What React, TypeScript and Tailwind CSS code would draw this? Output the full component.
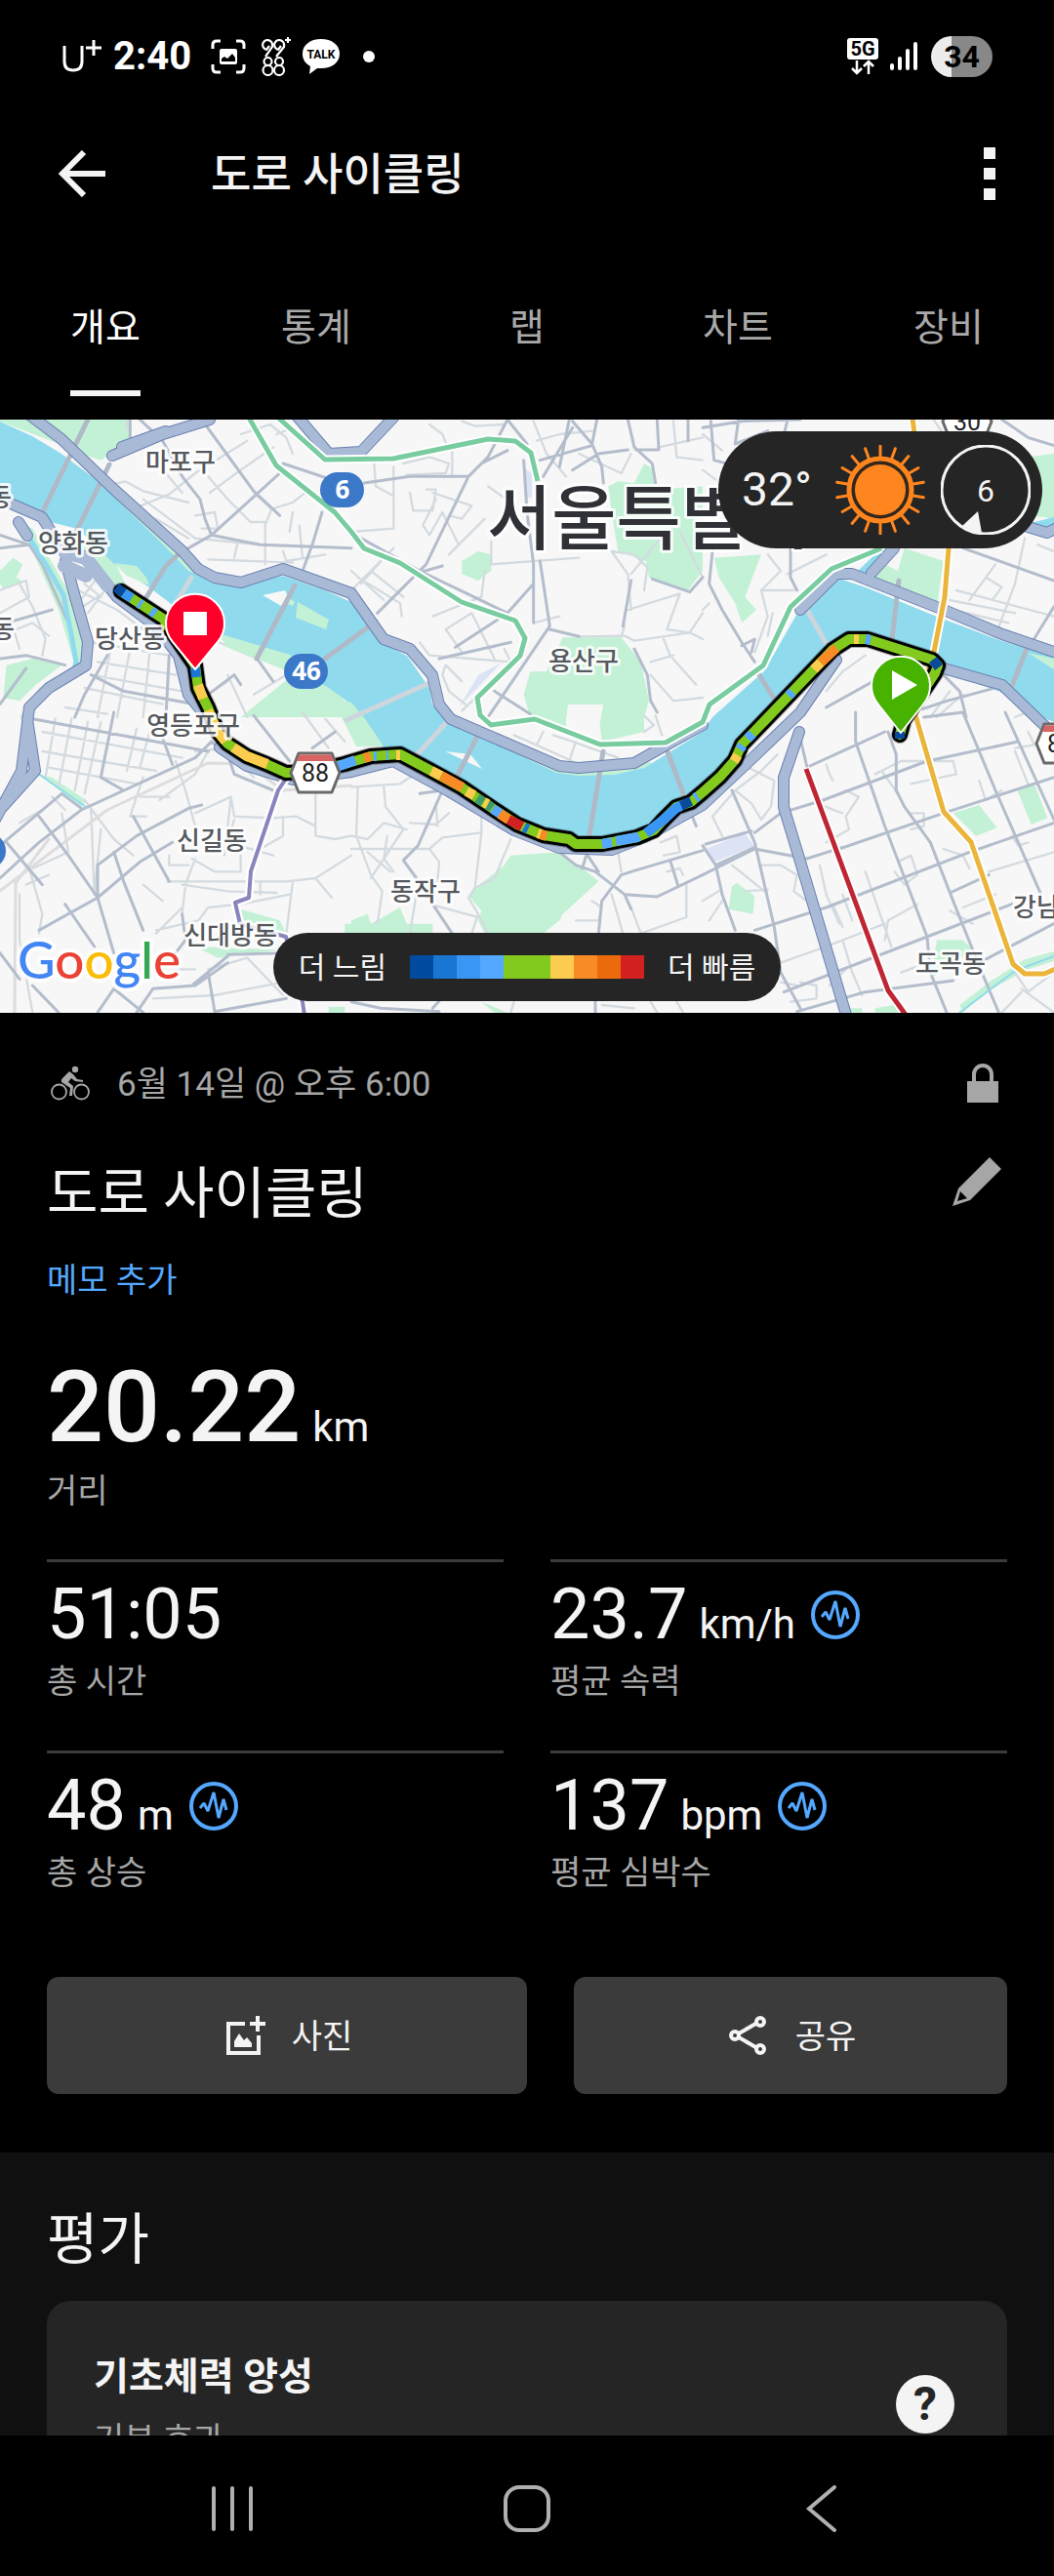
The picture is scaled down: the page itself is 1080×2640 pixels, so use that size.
import React from "react";

const tabs = ["개요", "통계", "랩", "차트", "장비"];

const legendColors = [
  "bg-[#004a9f]",
  "bg-[#1976d2]",
  "bg-[#3a96f5]",
  "bg-[#55a8ff]",
  "bg-[#82ca1d]",
  "bg-[#82ca1d]",
  "bg-[#fbcc4d]",
  "bg-[#f98b27]",
  "bg-[#eb6a0c]",
  "bg-[#d32020]",
];

const stats = [
  { value: "51:05", unit: "", label: "총 시간", chart: false },
  { value: "23.7", unit: "km/h", label: "평균 속력", chart: true },
  { value: "48", unit: "m", label: "총 상승", chart: true },
  { value: "137", unit: "bpm", label: "평균 심박수", chart: true },
];

// street tiles, each drawn in its own 1080 x 930 space and shown at a third
const tiles = [
  {
    at: "translate(0 425) scale(0.33333)",
    parks:
      "M0 0H400V85L310 140L250 120L180 90L0 20Z M0 480L40 440L70 460L50 500L75 515L10 535L0 520Z M20 770L100 750L190 770L110 830L60 880L10 870Z M60 930L120 840L230 770L180 600L60 330L100 350L220 560L260 700L250 790L130 860L100 930Z M660 670L880 730L930 760L880 770L700 710Z M740 930L900 800L1010 830L1080 900V930Z",
    minor:
      "M390 20V45M345 215L385 205L440 235L520 255L580 270M420 285L520 245L600 180L760 80M510 180L560 240M480 320L580 380M440 260L600 380M640 190L700 260L770 330M645 240L740 170L840 100M780 240L835 290L900 270L950 230M835 290L815 340V460M770 330H815M740 60L830 30L880 70L900 120M850 60L900 40L960 90M600 380L700 390L800 400M720 440L730 395M640 445L900 455M870 420L880 450L1000 430M920 340L930 440M890 360L900 300M600 310L660 300L670 350H620M0 540L80 510L90 560L0 610M60 520L100 590L140 690L130 740M0 680L100 640L150 680M180 580L240 560M240 540L360 600L440 660L500 700M240 600L300 560M260 520L310 560M280 700L520 740M300 760L540 800M280 800L560 850M340 720L300 930M400 720L360 930M460 730L440 930M260 840L500 890M650 690L790 750M700 800L760 930M640 860L700 820M780 860L880 800M300 500L240 580M330 530L270 610M200 900L330 920M30 620L60 720",
    major:
      "M620 15L780 235L860 310M860 180L650 370L580 410M400 15V80M560 190L615 260L630 320L650 370L800 400L1080 410M990 300L960 400L930 480M870 150L1080 220M430 15L500 80L560 190M0 370L90 400L130 460L210 640M0 410L90 400M330 740L260 860L230 930M280 800L380 850L600 890M520 740L510 930M790 750L840 820M640 860L720 800L740 830M0 750L80 740L200 770M0 890L80 780M20 640L160 600",
  },
  {
    at: "translate(360 425) scale(0.33333)",
    parks:
      "M340 450L390 420L430 430V480L390 510L340 490Z M650 685H830L890 760L915 880L900 930H550L530 860L550 790H600Z M790 220L820 205L870 210L900 150L925 165L935 230L1080 220V480L1030 545L915 500L905 450L850 430L820 420L800 300Z",
    minor:
      "M240 30L280 60L300 110M240 130L300 150L290 180L170 185M70 150L75 220L130 250M130 160V350L0 360M180 240L190 295H250L260 230H230M250 240L370 280L340 320L300 310M260 260L220 340L240 370L280 300L330 400M420 220L490 270M300 430L410 320M430 390V460L700 440M410 480L400 560L250 620M0 540L130 410M20 500L150 580L155 620M60 480L160 560M0 480L100 570M100 440L30 520M800 420L870 430L910 470L900 540M800 420L850 490L860 600M1010 360L1080 500M950 380L860 490M830 680L840 650M850 600L1010 550L970 660L1040 670L1080 610M700 682L840 680L870 695L1040 670L1080 690M960 690L980 740L1060 830M920 760L990 740M920 800L990 880L1080 870M560 20L600 120L660 190M570 80L640 60L740 50M700 120L830 180L860 120M945 100L1080 70M990 20L1000 130L1080 140M340 20L380 35L470 30M210 700L240 740L490 760L470 720M290 660L340 730M290 660L370 610L440 750M340 820L290 770L280 800L300 850L350 890M340 910L520 740M160 150L240 130M310 110L310 190M560 640L640 620",
    major:
      "M480 15L420 130L360 190L230 460L80 610M360 190L180 190L40 210M480 15L540 90M400 150L480 110M530 140L540 300L560 460V640M580 450L610 650L420 930M280 465L210 485M670 15L640 160M680 20L740 90L770 160L775 210M580 140L740 95M755 15L740 90M680 170L760 120L850 108M850 15L870 100L925 150L935 210M875 108H945L940 15M1035 15V80M590 190L680 40M30 380L210 480L480 610L560 520M320 715L450 630M270 750L490 700M610 660L700 682M860 510L835 650M870 720L910 800L920 880L940 915M440 850L550 920M925 505L1040 545L1080 500",
  },
  {
    at: "translate(720 425) scale(0.33333)",
    parks:
      "M35 440L180 430L130 560L165 600L120 640L100 580L50 500Z M620 410L740 450L720 590L600 560L520 500L560 460L600 480Z M1000 130L1080 120V320L1010 310Z",
    minor:
      "M200 430L240 480L180 540H280M180 540L200 620L160 730M215 610L200 680M0 600L20 580M380 430L260 490M780 540L1080 620M900 460L820 570M990 380L960 520L900 680M870 500L920 530L890 570M1030 400L1080 420M760 570L960 610M770 600L940 640M720 930L800 860M780 800L1000 880M760 850L700 930M380 850L430 790L500 740M960 930L1080 880M700 0L740 60M0 60L60 110M0 170L40 200",
    major:
      "M25 20L35 140L150 170M110 15L100 90L200 50M260 20L250 60M920 15L1000 70L1080 95M270 410V500L290 540M30 420L20 520L60 600L120 700L160 760M800 410L1080 510M1080 590L1000 720M120 710L160 690L150 730M380 900L560 800M600 930L750 880L900 840M740 800L790 850L810 930M0 40L120 20L300 15",
  },
  {
    at: "translate(0 730) scale(0.33333)",
    parks:
      "M115 190L250 290L265 270L160 200Z M740 605L860 640L880 680L740 640Z M600 720L860 730L670 755Z M1060 650H1080V680H1060Z M1010 905H1060V925H1010Z",
    minor:
      "M60 560V700L100 923M90 480L130 620L120 680M310 360L290 560M280 300L290 560M260 270L350 390L410 440M600 120L700 110L780 200M440 200L400 320H450M490 270L600 190L640 120M430 260H520M540 150L570 240L600 350M600 310L710 260L720 320L840 325L910 320L970 350M710 260L690 440M720 330L700 400L840 440M870 320V380L800 420M520 440V470H580M590 450L660 490H740V440M515 520H880M560 530L700 550L850 555M970 250V380L1030 390L1080 380M880 520L970 510L1080 440M970 510L1020 570M900 520L880 680M560 620L570 530L600 450M560 600L480 680M440 530L500 580M480 670L610 640L640 600L740 590L890 560M470 880L660 870L870 830M640 790L760 755L870 870M530 790H600M190 310L210 430L100 480M60 340L130 300M200 300L160 260M150 500L80 530M130 60L560 140M130 120L480 180M150 170L420 220M170 20L140 200M220 20L180 230M270 30L230 240M310 30L260 250M420 50L390 180M460 60L430 170M800 520V560M1000 130L1080 200M1000 20L1060 90M930 0L1010 110",
    major:
      "M0 510L120 400L250 300L600 140L650 90M0 410L190 250L250 295M120 320L210 440L300 570L350 740M20 400L130 530M350 0L310 200L380 240M300 470L420 380L580 295L620 285M410 320L520 520M350 430L380 520L440 670M120 670L300 570L430 460L530 400M200 590L290 720M650 90L700 130L720 190L840 240M100 20L640 120M500 80L530 160M780 10L890 150M1030 60L960 110M700 745L870 740M590 840L700 750M420 923L470 850L600 840L700 770M100 840L180 923M640 800L660 920L880 880M300 923L350 850L440 923M0 740L60 820M560 620L570 700L540 740M300 570L300 470",
  },
  {
    at: "translate(360 730) scale(0.33333)",
    parks:
      "M370 550L470 470L490 440L640 430L700 470L760 520L650 620L640 640L590 680H410L390 640L400 610L365 570Z M0 640L50 620L60 650L150 600L170 650L250 650V680H0Z M400 890L480 923H440Z M760 0H900V60L770 90Z M580 0H660V50L600 30Z",
    minor:
      "M20 230L15 380L60 500L95 550L80 650M100 230L105 290L160 360L60 510M0 380L50 390L100 340L170 360M0 420H240L270 460L265 520L200 560L180 680M180 340L260 345L300 310M260 280L265 350M240 420L280 385L400 370M50 430L120 490M110 380L100 450L130 490M400 370L380 540L360 570L390 620L370 680M400 310V370M490 390L440 510L380 540M240 590L390 630M390 620L420 680M740 580L770 600L760 640H690M820 430L830 490M800 560L835 680M860 600L890 680L1030 630V530M950 400L1000 380L1010 430L960 440M970 490L1010 480L1020 500M500 70L680 150M590 60L570 100M620 70L680 90L820 140M690 90L670 150M900 10L930 40L900 60M935 10L955 70M770 900L870 910M920 890L940 923M1000 890L1020 923M490 923L500 890M0 230L150 220L210 180",
    major:
      "M210 250L280 240L205 410L160 455L200 510M230 560L310 680M0 890L90 910L270 920M640 430L690 470L750 490L840 560L940 567L1080 500M720 430L760 490M710 480L725 430M760 680L770 580L830 500L870 487M870 487L1080 425M980 455L1005 535M840 560L860 605M1040 300L1060 350M750 690V923M250 910L270 888",
  },
  {
    at: "translate(720 730) scale(0.33333)",
    parks:
      "M770 310L850 285L905 355L840 380Z M965 235L1020 222L1060 325L1010 345Z M90 535L105 525L160 565L155 620L80 605Z M720 700H800L830 730L700 820Z M800 923L870 860L1000 790L1080 765V735L990 760L880 830L790 900Z M450 910H490V923H450Z M530 910L590 900L620 923H530Z",
    minor:
      "M30 320L100 240L180 180L230 130M140 170L220 210L210 290L180 330M30 320L60 380M100 240L150 280L180 330M380 160L390 190L400 210M360 470L380 560L420 650M400 590L430 660M430 560L460 640M500 490L580 720M550 180L600 250M530 190L550 180L610 150H770L780 190L640 220M440 240L480 260L440 320L450 360L380 400M350 280L430 310M180 470H240L290 500L280 550L320 580M130 550L200 545M90 470L190 550M0 580L50 550M20 640L60 580M240 770L380 720L560 650M430 700L460 800L490 870M440 790L390 840M560 700L570 640L660 590M600 460L640 440L660 500L620 530L590 490M640 310H680V350L640 360M740 420L800 440L820 480M880 490L1080 430M850 210L870 270L920 240M950 380L970 410L1000 400M960 120L1000 220M1000 60L1020 100L960 110M800 600L900 560M760 610L830 650M980 860L920 923M980 850L1080 923M960 800L1000 860L1080 800M610 800L690 770M300 830L350 840V880L270 890M240 830L290 840",
    major:
      "M330 165L560 60M370 270L690 150L970 90M240 310L370 270M420 420L740 310L1080 200M160 370L240 310M0 500L160 420L320 450L430 415M160 670L380 600L820 430L1080 340M250 860L690 690L950 590M290 920L500 860L770 825M470 90L560 350L690 690L700 800L750 923M570 60L595 130V240L620 290L700 400L770 580L850 780L910 923M800 0L900 240L1040 560M930 0L1080 330M90 240L160 400L220 660L240 800L300 910M40 470L60 560L100 670M300 80L320 165M470 0V90M0 410L40 470L160 415M10 405L150 365M800 0L680 15M850 770L1080 650M760 555L880 500",
  },
];

const riverPath =
  "M0 432L33 447L63 465L103 495L133 525L167 558L193 585L220 597L247 600L290 590L333 605L360 617L390 658L417 672L440 705L443 722L467 743L570 792L593 795L630 794L660 787L720 750L730 735L783 688L823 618L860 593L887 602L960 632L1027 657L1080 673V740L1067 735L1023 708L967 688L889 660L870 660L853 672L787 735L753 780L720 810L693 830L647 860L617 867L590 865L527 843L477 807L410 773L393 767L385 755L373 745L360 722L337 705L297 682L230 652L190 630L153 602L117 578L80 542L43 533L17 515H0Z";

const highwayPath =
  "M30 425L63 450L113 498L187 565L203 583L220 592L247 597L290 583L360 608L393 655L420 665L443 692L450 722L462 737L573 785L593 787L650 782L680 765L720 743M115 467L167 445L215 430M125 458L170 442M303 425L337 465L370 463L403 428M820 625L857 588L873 588L967 625L1027 650L1080 668M13 517L43 530L67 568L87 570L120 612L160 642L183 672L193 712L214 738M67 575L77 612L90 658L88 682L50 705L30 725L22 790L-5 840M28 737L36 790L0 830M819 750L803 797V827L820 883L867 1040M225 766L253 785L300 799L360 791L403 780L460 811L527 851L573 869L627 871L660 858L720 825L770 778L820 730L857 676M967 685L1027 702L1082 755M893 587L916 562M19 535L28 549M1053 540L1073 546L1085 540";

const greenLine =
  "M255 428L283 477L343 525L360 545L373 562L410 577L473 617L528 636L538 654L533 672L489 715L492 733L503 743L548 737L615 763L682 761L720 740L727 722L782 682L810 622L852 583L903 562M285 428L333 471L403 470L500 450L528 452L544 464L551 493";
const yellowLine =
  "M935 428L937 445L972 562L968 612L957 668L938 733L967 832L995 863L1038 988L1050 998H1070L1084 992";
const redLine = "M826 788L910 1015L928 1040";
const purpleLine = "M293 798L285 810L257 893L255 920L241 925L246 947L293 960L310 1027L312 1040";

const routePath =
  "M922 753L926 738L958 690L961 682L955 676L889 655L870 655L853 666L787 735L760 763L753 779L738 796L720 812L708 822L693 827L680 840L670 851L653 858L617 865H590L583 860L557 856L530 845L507 830L473 807L440 789L410 773L380 775L353 783L318 791L293 792L273 783L253 775L233 762L223 750L213 725L203 705L200 682L167 634L124 606";

const routeColors = [
  { color: "#0a4a9c", d: "M119 602L127 608M922 750V757M956 676L962 684M697 826L708 821" },
  { color: "#1976d2", d: "M200 684L201 694M537 848L541 850" },
  { color: "#3a96f5", d: "M127 608L135 613M662 854L680 840L693 828L698 826" },
  {
    color: "#55a8ff",
    d: "M142 618L145 620M155 626L159 629M345 786L364 779M383 775L386 775M396 774L398 774M505 829L514 835M617 865L627 863M631 862L653 858L655 857M758 768L761 764M766 757L771 752M808 713L812 709M887 655L892 656M712 818L715 816",
  },
  { color: "#3d9a6b", d: "M489 818L495 822M499 824L504 828" },
  {
    color: "#fbcc4d",
    d: "M203 702L208 716M213 728L223 750L231 760M239 766L253 775L274 783M406 774L410 774M442 790L452 795M478 811L486 815M496 822L500 824M752 780L756 774M834 686L841 679M875 655L880 655M551 854L554 855",
  },
  { color: "#f98b27", d: "M373 777L380 775M452 795L474 807M512 834L521 840M554 855L560 857M841 679L857 664" },
  { color: "#d32020", d: "M521 840L535 847" },
];

const placeNames = [
  { x: 185, y: 483, text: "마포구" },
  { x: 75, y: 566, text: "양화동" },
  { x: 133, y: 664, text: "당산동" },
  { x: 198, y: 753, text: "영등포구" },
  { x: 217, y: 871, text: "신길동" },
  { x: 236, y: 968, text: "신대방동" },
  { x: 436, y: 923, text: "동작구" },
  { x: 598, y: 687, text: "용산구" },
  { x: 974, y: 997, text: "도곡동" },
  { x: 1074, y: 939, text: "강남구" },
  { x: 0, y: 519, text: "동" },
  { x: 3, y: 654, text: "동" },
];

const BikeIcon = () => (
  <svg viewBox="0 0 42 36" className="h-9 w-[42px]" fill="none" stroke="currentColor" aria-hidden="true">
    <circle cx="9.500" cy="27" r="7.500" strokeWidth="1.800" />
    <circle cx="32.500" cy="27" r="7.500" strokeWidth="1.800" />
    <circle cx="26" cy="4" r="3.200" fill="currentColor" stroke="none" />
    <path d="M20 6L24 9L28 14L34 15V17L26 16L22 13L19 17L24 21L23 31H20L21 23L12 17Q11 15 13 13Z" fill="currentColor" stroke="none" />
  </svg>
);

const LockIcon = () => (
  <svg viewBox="0 0 32 40" className="h-10 w-8" aria-hidden="true">
    <path d="M0 18H32V40H0Z" fill="currentColor" />
    <path d="M7 20V11A9 9 0 0 1 25 11V20" fill="none" stroke="currentColor" strokeWidth="4" />
  </svg>
);

const PencilIcon = () => (
  <svg viewBox="0 0 50 50" className="h-[50px] w-[50px]" fill="currentColor" aria-hidden="true">
    <path d="M38 0L50 12L18 44L0 50L6 32ZM8 35L5 45L15 42Z" fillRule="evenodd" />
  </svg>
);

const ChartIcon = () => (
  <svg viewBox="0 0 50 50" className="h-[50px] w-[50px]" fill="none" stroke="#55a8ff" aria-hidden="true">
    <circle cx="25" cy="25" r="23" strokeWidth="4" />
    <path d="M11 27L15 22L19 30L25 11L30 37L35 18L38 29" strokeWidth="3" strokeLinejoin="bevel" />
  </svg>
);

const PhotoIcon = () => (
  <svg viewBox="0 0 48 48" className="h-12 w-12" fill="none" stroke="currentColor" aria-hidden="true">
    <path d="M24 12H7V42H38V24" strokeWidth="4" />
    <path d="M37 4V20M29 12H45" strokeWidth="4" />
    <path d="M13 36V30L18 22L23 29L26 26L31 32V36Z" fill="currentColor" stroke="none" />
  </svg>
);

const ShareIcon = () => (
  <svg viewBox="0 0 48 48" className="h-12 w-12" fill="none" stroke="currentColor" strokeWidth="4" aria-hidden="true">
    <path d="M14 22L33 11M14 26L33 37" />
    <circle cx="10" cy="24" r="4" />
    <circle cx="36" cy="10" r="4" />
    <circle cx="36" cy="38" r="4" />
  </svg>
);

const SunIcon = () => (
  <svg viewBox="-46 -46 92 92" className="h-[92px] w-[92px]" stroke="#ff861f" aria-hidden="true">
    <circle r="32" fill="#33261b" strokeWidth="5" />
    <circle r="26" fill="#ff861f" stroke="none" />
    {Array.from({ length: 18 }, (_, i) => (
      <path key={i} d="M0 -33V-45" strokeWidth="3" strokeLinecap="round" transform={`rotate(${i * 20})`} />
    ))}
  </svg>
);

const WindIcon = () => (
  <svg viewBox="-46 -46 92 92" className="h-[92px] w-[92px]" aria-label="바람 6">
    <circle r="45" fill="none" stroke="#f4f4f4" strokeWidth="3" />
    <path d="M-8 22L-24 37Q-14 43 -4 44Z" fill="#f4f4f4" />
    <text y="12" textAnchor="middle" fontSize="32" fill="#f4f4f4">
      6
    </text>
  </svg>
);

const StatusBar = () => (
  <div className="flex h-[116px] items-center justify-between pl-16 pr-[63px] text-white">
    <div className="flex items-center">
      <svg viewBox="0 0 40 36" className="h-9 w-10" fill="none" stroke="#fff" aria-label="U+">
        <path d="M2 7V23Q2 32 11 32T20 23V7" strokeWidth="3" />
        <path d="M32 1V17M24 9H40" strokeWidth="3" />
      </svg>
      <span className="ml-3 text-[40px] leading-[48px] font-bold">2:40</span>
      <svg viewBox="0 0 36 36" className="ml-5 h-9 w-9" fill="none" stroke="#fff" strokeWidth="3" aria-hidden="true">
        <path d="M2 10V6Q2 2 6 2H10M26 2H30Q34 2 34 6V10M34 26V30Q34 34 30 34H26M10 34H6Q2 34 2 30V26" />
        <rect x="9" y="10" width="18" height="16" rx="2" fill="#fff" stroke="none" />
        <path d="M11 23V20L14 18L17 20L22 15L25 19V23Z" fill="#000" stroke="none" />
      </svg>
      <svg viewBox="0 0 30 40" className="ml-4 h-10 w-[30px]" fill="none" stroke="#fff" strokeWidth="2.200" aria-label="9988">
        <path d="M11 9A5 5 0 1 0 6 13M23 9A5 5 0 1 0 18 13" />
        <path d="M11 7V10L4 20M23 7V10L15 20M5 13L8 9M17 13L20 9M27 0V6M24 3H30" />
        <circle cx="6.500" cy="25" r="4" />
        <circle cx="18" cy="25" r="4" />
        <circle cx="6.500" cy="34" r="5" />
        <circle cx="18" cy="34" r="5" />
      </svg>
      <svg viewBox="0 0 38 36" className="ml-3 h-9 w-[38px]" aria-label="TALK">
        <path d="M19 0C30 0 38 6 38 15S30 30 19 30H15L7 36L8 28C3 25 0 21 0 15C0 6 8 0 19 0Z" fill="#fff" />
        <text x="19" y="20" textAnchor="middle" fontSize="12" fontWeight="700" fill="#000">
          TALK
        </text>
      </svg>
      <span className="ml-6 h-3 w-3 rounded-full bg-white" />
    </div>
    <div className="flex items-center">
      <svg viewBox="0 0 32 38" className="h-[38px] w-8" aria-label="5G">
        <rect width="32" height="22" rx="3" fill="#fff" />
        <text x="16" y="18" textAnchor="middle" fontSize="20" fontWeight="700" fill="#000">
          5G
        </text>
        <path d="M10 23V36M5 31L10 36L15 31M22 37V24M17 29L22 24L27 29" fill="none" stroke="#fff" strokeWidth="2.500" />
      </svg>
      <svg viewBox="0 0 28 30" className="ml-3 h-[30px] w-7" stroke="#fff" strokeWidth="4" strokeLinecap="round" aria-hidden="true">
        <path d="M2 24V27M10 17V27M18 9V27M26 2V27" />
      </svg>
      <span className="ml-3.5 flex h-[42px] w-[63px] items-center justify-center rounded-full bg-[linear-gradient(to_right,#ececec_33%,#888_33%)] text-[32px] leading-none font-bold text-black">
        34
      </span>
    </div>
  </div>
);

const Header = () => (
  <header className="flex h-[124px] items-center pl-[60px] pr-[60px] text-[#f4f4f4]">
    <button aria-label="뒤로" className="flex h-12 w-12 items-center">
      <svg viewBox="0 0 48 48" className="h-12 w-12" fill="none" stroke="currentColor" strokeWidth="6">
        <path d="M26 2L4 24L26 46M4 24H48" />
      </svg>
    </button>
    <h1 className="ml-[108px] flex-1 pt-1 text-[45px] leading-[60px] font-medium">도로 사이클링</h1>
    <button aria-label="더보기" className="flex flex-col gap-[9px]">
      <span className="h-3 w-3 bg-current" />
      <span className="h-3 w-3 bg-current" />
      <span className="h-3 w-3 bg-current" />
    </button>
  </header>
);

const Tabs = () => (
  <nav className="grid h-[190px] grid-cols-5">
    {tabs.map((tab, i) => (
      <button key={tab} className="flex flex-col items-center pt-[70px]">
        <span className={i === 0 ? "text-[39px] leading-[52px] text-white" : "text-[39px] leading-[52px] text-[#a9a9a9]"}>
          {tab}
        </span>
        {i === 0 && <span className="mt-[38px] h-1.5 w-[72px] bg-[#f4f4f4]" />}
      </button>
    ))}
  </nav>
);

const RoadShield = ({ x, y, text }: { x: number; y: number; text: string }) => (
  <g transform={`translate(${x} ${y})`}>
    <path d="M-17 -20H17L25 0L17 20H-17L-25 0Z" fill="#fff" stroke="#6a6a6a" strokeWidth="3" strokeLinejoin="round" />
    <path d="M-16.500 -18.500H16.500L19 -12H-19Z" fill="#d96464" />
    <text y="9" textAnchor="middle" fontSize="25" fill="#222">
      {text}
    </text>
  </g>
);

const RouteMap = () => (
  <svg
    viewBox="0 430 1080 608"
    preserveAspectRatio="xMidYMid slice"
    className="block h-[608px] w-full font-['Noto_Sans_CJK_KR',sans-serif]"
    fill="none"
    strokeLinejoin="round"
    strokeLinecap="round"
    role="img"
    aria-label="경로 지도"
  >
    <rect y="430" width="1080" height="608" fill="#f7f7f7" />
    {tiles.map((tile) => (
      <path key={tile.at} d={tile.parks} transform={tile.at} fill="#c3f1d5" />
    ))}
    <path d="M723 870L763 854L773 867L733 883ZM538 480L545 485V510H539ZM490 692L513 680L470 725Z" fill="#dbe3f5" />
    <path d="M582 722H618L615 740H580Z" fill="#f7f7f7" />
    {tiles.map((tile) => (
      <path key={tile.at} d={tile.minor} transform={tile.at} stroke="#d4dbe0" strokeWidth="7" />
    ))}
    <path d="M0 913L110 830L213 782L253 783L290 810L360 805M15 1038L16 905L50 860" stroke="#dddcde" strokeWidth="3" />
    {tiles.map((tile) => (
      <path key={tile.at} d={tile.major} transform={tile.at} stroke="#b4bdcc" strokeWidth="9" />
    ))}

    {/* river and riverside parks */}
    <path
      d="M95 490L190 582L225 603L250 606L210 600L160 560ZM500 765L570 800L600 803L640 798L665 785L590 792ZM80 560L125 600L115 580L90 555Z"
      fill="#c3f1d5"
      stroke="#c3f1d5"
      strokeWidth="8"
    />
    <path d={riverPath} fill="#90daee" />
    <path d="M878 586L900 565L917 563L905 582L890 592ZM1040 540L1080 530V545L1060 548Z" fill="#90daee" />
    <path d="M28 548L48 580L65 610L73 650L78 678L75 690" stroke="#90daee" strokeWidth="5" />
    <path d="M38 792L88 827M983 1038L1040 995L1080 980" stroke="#90daee" strokeWidth="2" />
    <path
      d="M117 577L140 580L150 592L153 600L130 590ZM290 608L302 617L300 621L292 618ZM305 617L337 635L334 645L303 633ZM230 651L297 671L320 687L300 690L230 662ZM360 720L375 738L393 765L365 765L340 715ZM1053 669L1080 675V686Z"
      fill="#c3f1d5"
    />
    <path d="M269 610L292 605L297 615L290 622ZM456 770L482 773L494 788Z" fill="#f7f7f7" />
    <g stroke="#b0b9c6" strokeWidth="5">
      <path d="M90 430L40 532M112 476L78 545M183 568L170 580L150 612M302 600L263 675M385 637L333 675M490 753L466 800M618 770L602 868M683 768L705 826M777 690L797 722M921 595L914 655M1052 665L1034 710" />
      <path d="M196 592L180 618M440 700L355 738M456 742L425 776M823 618L848 662" stroke="#cdd6dc" />
    </g>

    <path d={highwayPath} stroke="#6b80b0" strokeWidth="12" />
    <path d={highwayPath} stroke="#a9bad7" strokeWidth="10" />
    <path d="M67 566L88 572L110 600M66 580L88 590" stroke="#a9bad7" strokeWidth="14" />

    <g strokeLinecap="butt">
      <path d={`${greenLine}${yellowLine}${redLine}${purpleLine}`} stroke="#fff" strokeWidth="9" />
      <path d={greenLine} stroke="#79cca0" strokeWidth="5" />
      <path d={yellowLine} stroke="#eab53a" strokeWidth="5" />
      <path d={redLine} stroke="#bf2633" strokeWidth="5" />
      <path d={purpleLine} stroke="#8985bd" strokeWidth="4" />
    </g>

    {/* ride track, coloured by speed */}
    <path d={routePath} stroke="#000" strokeOpacity="0.3" strokeWidth="18" />
    <path d={routePath} stroke="#000" strokeWidth="16" />
    <path d={routePath} stroke="#82ca1d" strokeWidth="10" />
    <g strokeLinecap="butt" strokeWidth="10">
      {routeColors.map((part) => (
        <path key={part.color} d={part.d} stroke={part.color} />
      ))}
    </g>

    <g fill="#55595e" stroke="#fff" strokeWidth="6" strokeOpacity="0.85" paintOrder="stroke" fontSize="26" fontWeight="500">
      {placeNames.map((place) => (
        <text key={place.text + place.y} x={place.x} y={place.y} textAnchor="middle">
          {place.text}
        </text>
      ))}
      <text x="499" y="557" fontSize="72" fill="#303136">
        서울특별시
      </text>
    </g>

    <g fill="#3b78c8">
      <rect x="328" y="484" width="45" height="36" rx="18" />
      <rect x="291" y="670" width="45" height="36" rx="18" />
      <rect x="-39" y="854" width="45" height="36" rx="18" />
    </g>
    <g fill="#fff" fontSize="26" fontWeight="700" textAnchor="middle" fontFamily="Noto Sans">
      <text x="351" y="511">6</text>
      <text x="314" y="697">46</text>
    </g>
    <g fontFamily="Roboto">
      <RoadShield x={323} y={792} text="88" />
      <RoadShield x={1087} y={762} text="88" />
      <RoadShield x={991} y={432} text="30" />
    </g>

    <g stroke="#fff" strokeWidth="2">
      <path d="M200 686L177 658A30 30 0 1 1 223 658Z" fill="#ff002b" />
      <path d="M923 751L900 722A30 30 0 1 1 946 722Z" fill="#47b200" />
    </g>
    <path d="M188 627H212V651H188ZM914 687L940 702L914 717Z" fill="#fff" />

    <text
      x="18"
      y="1003"
      fontFamily="Lato"
      fontSize="53"
      fontWeight="500"
      stroke="#fff"
      strokeWidth="8"
      strokeOpacity="0.7"
      paintOrder="stroke"
    >
      <tspan fill="#4285f4">G</tspan>
      <tspan fill="#ea4335">o</tspan>
      <tspan fill="#fbbc05">o</tspan>
      <tspan fill="#4285f4">g</tspan>
      <tspan fill="#34a853">l</tspan>
      <tspan fill="#ea4335">e</tspan>
    </text>
  </svg>
);

const MapPanel = () => (
  <section className="relative text-[#f4f4f4]">
    <RouteMap />
    <div className="absolute top-3 right-3 flex h-[120px] items-center rounded-full bg-[#252525] pl-6 pr-3">
      <span className="mr-6 text-[48px] leading-[60px]">32°</span>
      <SunIcon />
      <span className="ml-4">
        <WindIcon />
      </span>
    </div>
    <div className="absolute inset-x-0 bottom-3 flex justify-center">
      <div className="flex h-[70px] items-center gap-6 rounded-full bg-[#252525] px-[26px] text-[30px] leading-10">
        <span className="pt-0.5">더 느림</span>
        <div className="flex">
          {legendColors.map((color, i) => (
            <span key={i} className={`h-6 w-6 ${color}`} />
          ))}
        </div>
        <span className="pt-0.5">더 빠름</span>
      </div>
    </div>
  </section>
);

const Summary = () => (
  <section className="px-12 pt-12 pb-15 text-[#f4f4f4]">
    <div className="flex h-12 items-center px-[3px] text-[#a6a6a6]">
      <BikeIcon />
      <span className="ml-[27px] flex-1 pt-1 text-[35px] leading-[48px]">6월 14일 @ 오후 6:00</span>
      <span className="mr-1.5">
        <LockIcon />
      </span>
    </div>
    <div className="mt-[52px] flex items-start justify-between pr-1.5">
      <h2 className="text-[57px] leading-[76px]">도로 사이클링</h2>
      <button aria-label="편집" className="text-[#a6a6a6]">
        <PencilIcon />
      </button>
    </div>
    <a href="#memo" className="mt-6 block text-[34px] leading-[52px] text-[#55a8ff]">
      메모 추가
    </a>
    <div className="mt-11 flex items-baseline gap-3">
      <span className="text-[102px] leading-[120px] font-medium">20.22</span>
      <span className="text-[42px] leading-[48px]">km</span>
    </div>
    <p className="text-[34px] leading-[52px] text-[#a6a6a6]">거리</p>

    <div className="mt-11 grid grid-cols-2 gap-x-12">
      {stats.map((stat) => (
        <div key={stat.label} className="border-t-[3px] border-[#3b3b3b] pt-3 pb-[45px]">
          <div className="flex h-[84px] items-center">
            <div className="flex items-baseline gap-3">
              <span className="text-[72px] leading-[84px]">{stat.value}</span>
              <span className="text-[42px] leading-[48px]">{stat.unit}</span>
            </div>
            {stat.chart && (
              <button aria-label={`${stat.label} 차트`} className="ml-4">
                <ChartIcon />
              </button>
            )}
          </div>
          <p className="text-[34px] leading-[52px] text-[#a6a6a6]">{stat.label}</p>
        </div>
      ))}
    </div>

    <div className="mt-9 flex gap-12 text-[34px] leading-[52px]">
      <button className="flex h-30 grow-[41] basis-0 items-center justify-center gap-6 rounded-xl bg-[#3b3b3b]">
        <PhotoIcon />
        <span className="pt-0.5">사진</span>
      </button>
      <button className="flex h-30 grow-[37] basis-0 items-center justify-center gap-6 rounded-xl bg-[#3b3b3b]">
        <ShareIcon />
        <span className="pt-0.5">공유</span>
      </button>
    </div>
  </section>
);

const Rating = () => (
  <section className="bg-[#101010] px-12 pt-12 text-[#f4f4f4]">
    <h2 className="text-[57px] leading-[84px]">평가</h2>
    <div className="mt-5 flex justify-between rounded-3xl bg-[#252525] pt-[52px] pr-[54px] pb-12 pl-12">
      <div>
        <h3 className="text-[39px] leading-[52px] font-bold">기초체력 양성</h3>
        <p className="mt-3 text-[34px] leading-[52px] text-[#a6a6a6]">기본 효과</p>
      </div>
      <button
        aria-label="도움말"
        className="mt-6 flex h-15 w-15 items-center justify-center rounded-full bg-[#f4f4f4] text-[48px] leading-none font-bold text-[#252525]"
      >
        ?
      </button>
    </div>
  </section>
);

const NavBar = () => (
  <nav className="flex h-36 shrink-0 items-center justify-center gap-[254px] bg-black pt-1.5">
    <button aria-label="최근 앱">
      <svg viewBox="0 0 48 48" className="h-12 w-12" stroke="#b0b0b0" strokeWidth="4" strokeLinecap="round">
        <path d="M5 3V45M24 3V45M43 3V45" />
      </svg>
    </button>
    <button aria-label="홈">
      <svg viewBox="0 0 48 48" className="h-12 w-12" fill="none" stroke="#b0b0b0" strokeWidth="4">
        <rect x="2" y="2" width="44" height="44" rx="14" />
      </svg>
    </button>
    <button aria-label="뒤로 가기">
      <svg viewBox="0 0 48 48" className="h-12 w-12" fill="none" stroke="#b0b0b0" strokeWidth="4" strokeLinecap="round">
        <path d="M37 2L11 24L37 46" />
      </svg>
    </button>
  </nav>
);

const App: React.FC = () => {
  return (
    <div className="flex h-screen flex-col bg-black font-['Roboto','Noto_Sans_CJK_KR',sans-serif]">
      <div className="shrink-0">
        <StatusBar />
        <Header />
        <Tabs />
      </div>
      <main className="min-h-0 flex-1 overflow-y-auto [scrollbar-width:none]">
        <MapPanel />
        <Summary />
        <Rating />
      </main>
      <NavBar />
    </div>
  );
};

export default App;
